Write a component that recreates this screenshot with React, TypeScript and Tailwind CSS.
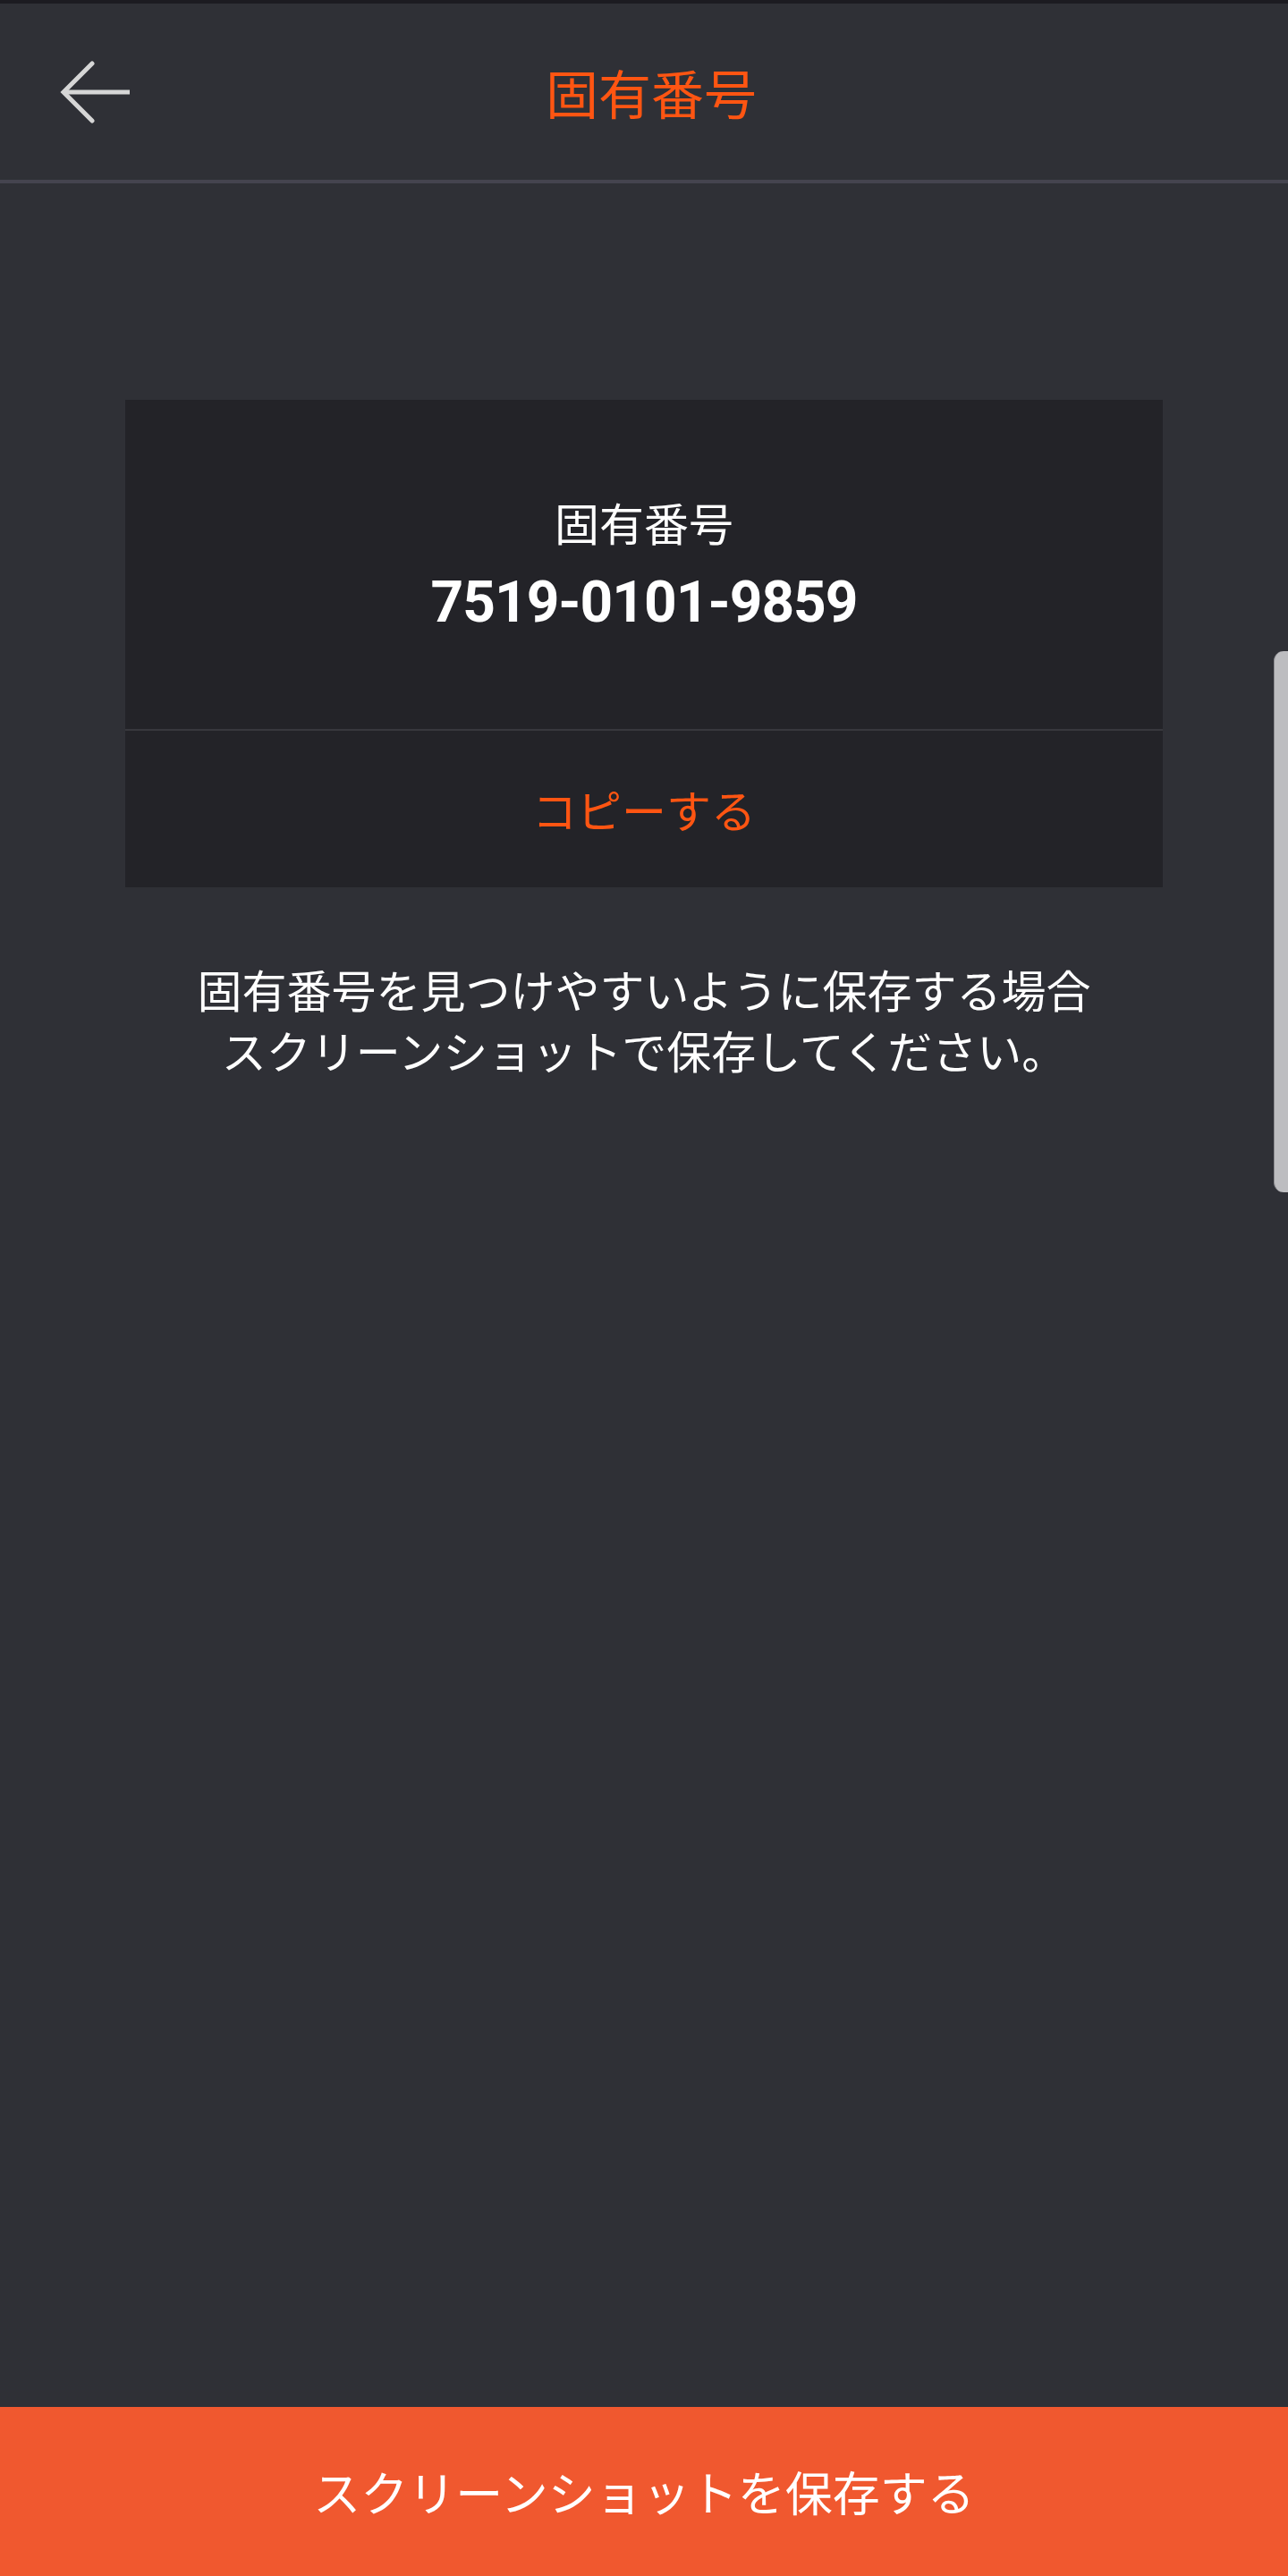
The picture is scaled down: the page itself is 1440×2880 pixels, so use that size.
import React from "react";

const jp = { fontFamily: '"Noto Sans CJK JP", "Noto Sans", sans-serif' };
const num = { fontFamily: 'Roboto, "Liberation Sans", sans-serif' };

function BackArrow() {
  return (
    <svg width="80" height="70" viewBox="0 0 80 70" fill="none">
      <path d="M78 35H5" stroke="#d6d6d6" strokeWidth="5" />
      <path d="M36 3L4 35L36 67" stroke="#d6d6d6" strokeWidth="5" strokeLinecap="round" strokeLinejoin="miter" />
    </svg>
  );
}

export default function App() {
  return (
    <div className="relative w-[1440px] h-[2880px] bg-[#2f3036] flex flex-col overflow-hidden" style={jp}>
      <div className="h-[4px] bg-[#1c1b21]" />
      <header className="h-[201px] grid grid-cols-[1fr_auto_1fr] items-center border-b-4 border-[#45444f]">
        <div className="pl-[67px] flex items-center">
          <BackArrow />
        </div>
        <h1 className="text-[59px] leading-[70px] text-[#ff5512] pl-[16px]">固有番号</h1>
        <div />
      </header>

      <main className="flex-1 flex flex-col items-center">
        <div className="mt-[242px] w-[1160px] bg-[#232328] flex flex-col">
          <div className="h-[368px] flex flex-col items-center pt-[108px]">
            <p className="text-[50px] leading-[56px] text-white">固有番号</p>
            <p className="mt-[23px] text-[64px] leading-[80px] font-bold tracking-[-1px] text-white" style={num}>
              7519-0101-9859
            </p>
          </div>
          <div className="h-[2px] bg-[#38383e]" />
          <button className="h-[175px] flex items-center justify-center text-[50px] text-[#ff5512]">
            コピーする
          </button>
        </div>

        <p className="mt-[79px] text-[50px] leading-[68px] text-white text-center">
          固有番号を見つけやすいように保存する場合
          <br />
          スクリーンショットで保存してください。
        </p>
      </main>

      <button className="h-[189px] bg-[#f0582f] flex items-center justify-center text-[53px] text-white">
        スクリーンショットを保存する
      </button>

      <div className="absolute right-0 top-[728px] w-[16px] h-[605px] rounded-l-[11px] bg-[#bdbdc0] border-l border-[#8c8c90]" />
    </div>
  );
}
